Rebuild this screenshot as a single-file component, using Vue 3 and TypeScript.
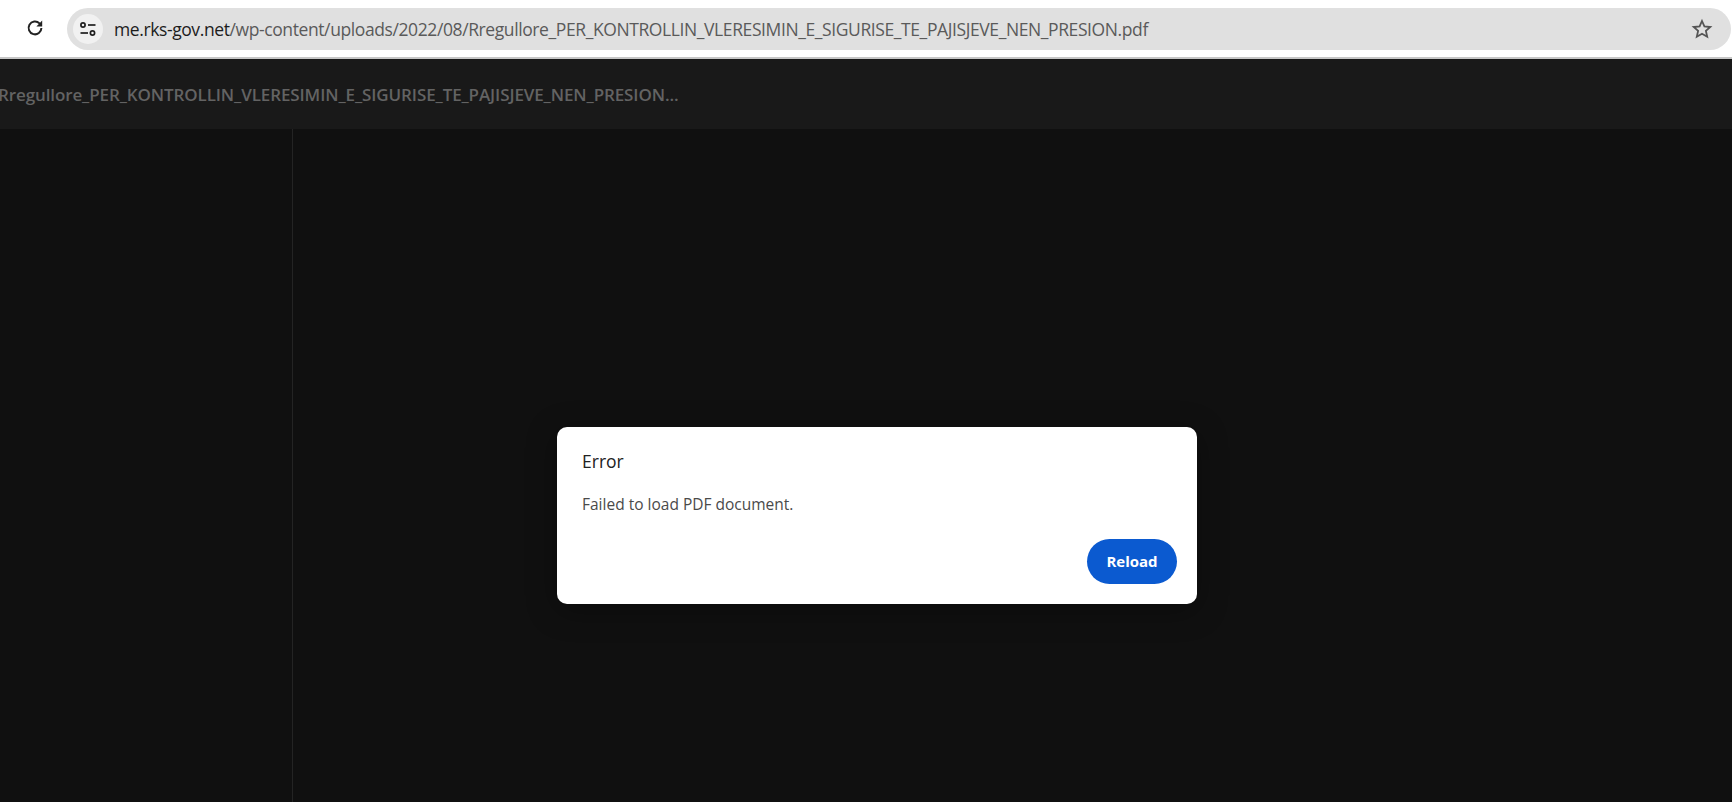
<script setup lang="ts">
const host = "me.rks-gov.net";
const path = "/wp-content/uploads/2022/08/Rregullore_PER_KONTROLLIN_VLERESIMIN_E_SIGURISE_TE_PAJISJEVE_NEN_PRESION.pdf";
const title = "Rregullore_PER_KONTROLLIN_VLERESIMIN_E_SIGURISE_TE_PAJISJEVE_NEN_PRESION...";
</script>

<template>
  <div class="page">
    <header class="chrome">
      <button class="reload-icon" aria-label="Reload page">
        <svg width="20" height="20" viewBox="0 0 20 20" fill="none">
          <path d="M16.4 10a6.4 6.4 0 1 1-1.9-4.6L16.2 7.2" stroke="#222" stroke-width="2" />
          <path d="M17.2 2.6v5.8h-5.8z" fill="#222" />
        </svg>
      </button>
      <div class="omnibox">
        <span class="tune">
          <svg width="20" height="20" viewBox="0 0 20 20" fill="none" stroke="#1f1f1f" stroke-width="1.7">
            <circle cx="5" cy="6" r="2.1" />
            <path d="M10 6h7.5" />
            <path d="M2.5 14H10" />
            <circle cx="14.5" cy="14" r="2.1" />
          </svg>
        </span>
        <span class="url"><span class="host">{{ host }}</span>{{ path }}</span>
        <svg class="star" width="22" height="22" viewBox="0 0 22 22" fill="none">
          <path d="M11 3l2.4 5.4 5.9.6-4.4 3.9 1.3 5.8L11 15.7l-5.2 3 1.3-5.8L2.7 9l5.9-.6z" stroke="#555" stroke-width="1.8" stroke-linejoin="miter" />
        </svg>
      </div>
    </header>

    <div class="viewer-bar">
      <span class="doc-title">{{ title }}</span>
    </div>

    <main class="viewer">
      <aside class="sidebar"></aside>
      <div class="dialog">
        <h2 class="dialog-title">Error</h2>
        <p class="dialog-text">Failed to load PDF document.</p>
        <div class="dialog-actions">
          <button class="reload-btn">Reload</button>
        </div>
      </div>
    </main>
  </div>
</template>

<style>
html, body { margin: 0; background: #101010; }
</style>

<style scoped>
.page {
  width: 1732px;
  height: 802px;
  display: flex;
  flex-direction: column;
  overflow: hidden;
  font-family: "Open Sans", "Noto Sans", sans-serif;
}
.chrome {
  flex: none;
  background: #fff;
  display: flex;
  align-items: flex-start;
  padding-top: 8px;
  height: 49px;
  border-bottom: 2px solid #c6c6c6;
}
.reload-icon {
  width: 67px;
  height: 42px;
  flex: none;
  border: 0;
  padding: 0 0 2px 3px;
  background: none;
  display: flex;
  align-items: center;
  justify-content: center;
}
.omnibox {
  width: 1664px;
  height: 42px;
  flex: none;
  background: #e0e0e0;
  border-radius: 21px;
  display: flex;
  align-items: center;
  padding: 0 18px 0 6px;
  box-sizing: border-box;
}
.tune {
  width: 30px;
  height: 30px;
  flex: none;
  border-radius: 50%;
  background: #f1f1f1;
  display: flex;
  align-items: center;
  justify-content: center;
}
.url {
  margin-left: 11px;
  flex: 1;
  font-size: 17.5px;
  letter-spacing: -0.4px;
  color: #5a5a5a;
  white-space: nowrap;
  overflow: hidden;
}
.host { color: #1c1c1c; }
.star { flex: none; }
.viewer-bar {
  height: 70px;
  flex: none;
  background: #191919;
  display: flex;
  align-items: center;
}
.doc-title {
  margin-left: -2px;
  font-size: 17px;
  font-weight: 600;
  letter-spacing: -0.11px;
  color: #636363;
  white-space: nowrap;
}
.viewer {
  flex: 1;
  display: flex;
  position: relative;
  background: #101010;
}
.sidebar {
  width: 292px;
  flex: none;
  border-right: 1px solid #242424;
}
.dialog {
  position: absolute;
  left: 557px;
  top: 298px;
  width: 640px;
  height: 177px;
  box-sizing: border-box;
  padding: 22px 20px 20px 25px;
  background: #fff;
  border-radius: 10px;
  box-shadow: 0 6px 30px rgba(0, 0, 0, 0.35);
  display: flex;
  flex-direction: column;
}
.dialog-title {
  margin: 0;
  font-size: 17.5px;
  font-weight: 400;
  line-height: 24px;
  color: #222;
}
.dialog-text {
  margin: 21px 0 0;
  font-size: 15.5px;
  line-height: 20px;
  color: #4a4a4a;
}
.dialog-actions {
  margin-top: auto;
  display: flex;
  justify-content: flex-end;
}
.reload-btn {
  width: 90px;
  height: 45px;
  border: 0;
  border-radius: 23px;
  background: #0b5ad0;
  color: #fff;
  font-family: inherit;
  font-size: 15px;
  font-weight: 700;
  padding: 0 0 2px;
}
</style>
